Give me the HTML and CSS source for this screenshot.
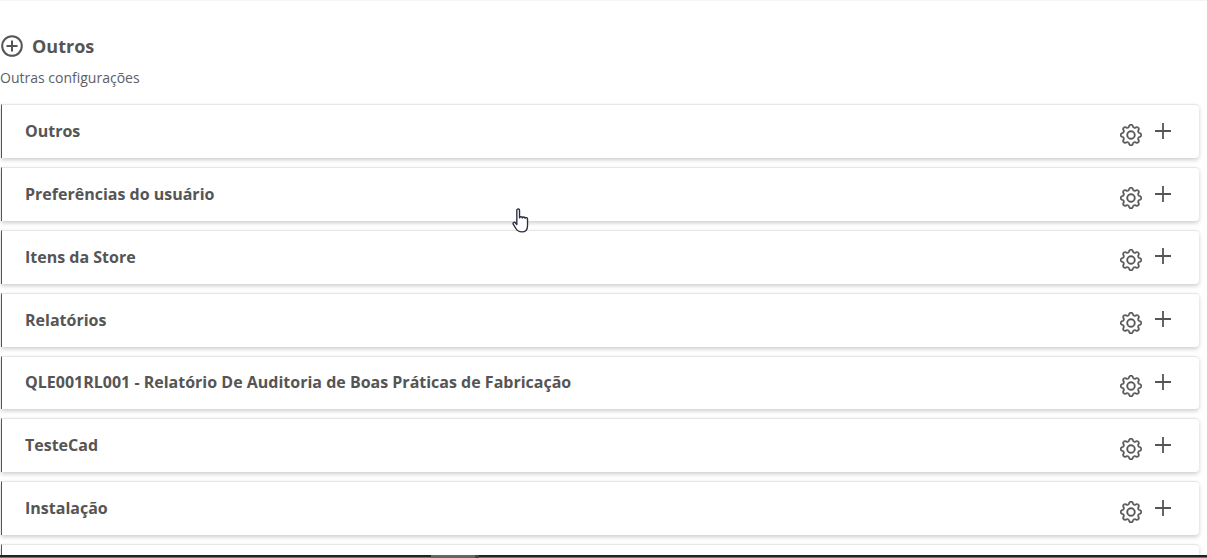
FILE: index.html
```html
<!DOCTYPE html>
<html lang="pt">
<head>
<meta charset="utf-8">
<title>Outros</title>
<link rel="stylesheet" href="styles.css">
</head>
<body>
<main class="page">
  <header class="head">
    <h1 class="title">
      <svg class="title-icon" viewBox="0 0 22 22" width="22" height="22"><circle cx="11" cy="11" r="9.8" fill="none" stroke="#555" stroke-width="2"/><path d="M11 5.5v11M5.5 11h11" fill="none" stroke="#555" stroke-width="2"/></svg>
      <span>Outros</span>
    </h1>
    <p class="sub">Outras configurações</p>
  </header>
  <section class="list">
    <article class="card"><h2 class="name">Outros</h2><div class="actions"><svg class="gear" viewBox="0 0 16 16" width="22" height="22"><use href="#gear"/></svg><svg class="plus" viewBox="0 0 16 16" width="16" height="16"><path d="M8 0v16M0 8h16"/></svg></div></article>
    <article class="card"><h2 class="name">Preferências do usuário</h2><div class="actions"><svg class="gear" viewBox="0 0 16 16" width="22" height="22"><use href="#gear"/></svg><svg class="plus" viewBox="0 0 16 16" width="16" height="16"><path d="M8 0v16M0 8h16"/></svg></div></article>
    <article class="card"><h2 class="name">Itens da Store</h2><div class="actions"><svg class="gear" viewBox="0 0 16 16" width="22" height="22"><use href="#gear"/></svg><svg class="plus" viewBox="0 0 16 16" width="16" height="16"><path d="M8 0v16M0 8h16"/></svg></div></article>
    <article class="card"><h2 class="name">Relatórios</h2><div class="actions"><svg class="gear" viewBox="0 0 16 16" width="22" height="22"><use href="#gear"/></svg><svg class="plus" viewBox="0 0 16 16" width="16" height="16"><path d="M8 0v16M0 8h16"/></svg></div></article>
    <article class="card"><h2 class="name">QLE001RL001 - Relatório De Auditoria de Boas Práticas de Fabricação</h2><div class="actions"><svg class="gear" viewBox="0 0 16 16" width="22" height="22"><use href="#gear"/></svg><svg class="plus" viewBox="0 0 16 16" width="16" height="16"><path d="M8 0v16M0 8h16"/></svg></div></article>
    <article class="card"><h2 class="name">TesteCad</h2><div class="actions"><svg class="gear" viewBox="0 0 16 16" width="22" height="22"><use href="#gear"/></svg><svg class="plus" viewBox="0 0 16 16" width="16" height="16"><path d="M8 0v16M0 8h16"/></svg></div></article>
    <article class="card"><h2 class="name">Instalação</h2><div class="actions"><svg class="gear" viewBox="0 0 16 16" width="22" height="22"><use href="#gear"/></svg><svg class="plus" viewBox="0 0 16 16" width="16" height="16"><path d="M8 0v16M0 8h16"/></svg></div></article>
    <article class="card"></article>
  </section>
</main>
<svg class="defs" width="0" height="0"><defs><g id="gear" fill="#555" stroke="#555" stroke-width=".3"><path d="M8 4.754a3.246 3.246 0 1 0 0 6.492 3.246 3.246 0 0 0 0-6.492zM5.754 8a2.246 2.246 0 1 1 4.492 0 2.246 2.246 0 0 1-4.492 0z"/><path d="M9.796 1.343c-.527-1.79-3.065-1.79-3.592 0l-.094.319a.873.873 0 0 1-1.255.52l-.292-.16c-1.64-.892-3.433.902-2.54 2.541l.159.292a.873.873 0 0 1-.52 1.255l-.319.094c-1.79.527-1.79 3.065 0 3.592l.319.094a.873.873 0 0 1 .52 1.255l-.16.292c-.892 1.64.901 3.434 2.541 2.54l.292-.159a.873.873 0 0 1 1.255.52l.094.319c.527 1.79 3.065 1.79 3.592 0l.094-.319a.873.873 0 0 1 1.255-.52l.292.16c1.64.893 3.434-.902 2.54-2.541l-.159-.292a.873.873 0 0 1 .52-1.255l.319-.094c1.79-.527 1.79-3.065 0-3.592l-.319-.094a.873.873 0 0 1-.52-1.255l.16-.292c.893-1.64-.902-3.433-2.541-2.54l-.292.159a.873.873 0 0 1-1.255-.52l-.094-.319zm-2.633.283c.246-.835 1.428-.835 1.674 0l.094.319a1.873 1.873 0 0 0 2.693 1.115l.291-.16c.764-.415 1.6.42 1.184 1.185l-.159.292a1.873 1.873 0 0 0 1.116 2.692l.318.094c.835.246.835 1.428 0 1.674l-.319.094a1.873 1.873 0 0 0-1.115 2.693l.16.291c.415.764-.42 1.6-1.185 1.184l-.291-.159a1.873 1.873 0 0 0-2.693 1.116l-.094.318c-.246.835-1.428.835-1.674 0l-.094-.319a1.873 1.873 0 0 0-2.692-1.115l-.292.16c-.764.415-1.6-.42-1.184-1.185l.159-.291A1.873 1.873 0 0 0 1.945 8.93l-.319-.094c-.835-.246-.835-1.428 0-1.674l.319-.094A1.873 1.873 0 0 0 3.06 4.377l-.16-.292c-.415-.764.42-1.6 1.185-1.184l.292.159a1.873 1.873 0 0 0 2.692-1.115l.094-.319z"/></g></defs></svg>
<svg class="cursor" viewBox="0 0 18 26" width="19" height="27"><path d="M4.5 2.2c0-1.6 2.6-1.6 2.6 0v7.3c.3-1.5 2.6-1.4 2.7.1.3-1.3 2.5-1.2 2.6.3.4-1 2.3-.8 2.4.6v6.5c0 3.5-2 6-5.5 6-3 0-4.4-1-5.5-3L1 15.6c-.7-1.4 1-2.4 2-1.4l1.5 1.8z" fill="#fff" stroke="#2b2d42" stroke-width="1.3" stroke-linejoin="round"/></svg>
<div class="bottom-bar"><span class="bottom-thumb"></span><span class="bottom-notch"></span></div>
</body>
</html>
```
FILE: styles.css
```css
* { box-sizing: border-box; }
html, body { margin: 0; height: 100%; overflow: hidden; background: #fff; }
body { font-family: "Open Sans", sans-serif; color: #555; }
.page { padding: 34px 8px 0 1px; border-top: 1px solid #f4f4f4; }
.head { margin-left: -1px; }
.title { display: flex; align-items: center; gap: 9px; margin: 0 0 0 1px; font-size: 18px; font-weight: 700; line-height: 22px; color: #555; }
.title-icon { flex: none; }
.sub { margin: 11px 0 0; font-size: 14px; line-height: 19px; color: #5c6066; }
.list { display: flex; flex-direction: column; gap: 9px; margin-top: 17.4px; }
.card { display: flex; align-items: center; justify-content: space-between; height: 53.8px; flex: none; padding: 0 28px 0 23px; background: #fff; border-left: 1px solid #555; border-top: 1px solid #e6e6e6; border-radius: 0 4px 4px 0; box-shadow: 0 2px 4px rgba(0,0,0,.2); }
.name { margin: -1px 0 0; font-size: 16px; font-weight: 700; line-height: 22px; color: #555; }
.actions { display: flex; align-items: center; gap: 13px; }
.gear { margin-top: 6px; }
.plus { margin-bottom: 2px; }
.plus path { fill: none; stroke: #555; stroke-width: 1.8; }
.defs { position: absolute; }
.cursor { position: absolute; left: 512px; top: 208px; }
.bottom-bar { position: absolute; left: 0; right: 0; bottom: 0; height: 3px; background: linear-gradient(#222 0 2px, #777 2px); }
.bottom-thumb { position: absolute; left: 431px; width: 44px; top: 0; bottom: 0; background: #666; }
.bottom-notch { position: absolute; left: 475px; width: 4px; top: 0; bottom: 0; background: #444; }
```
